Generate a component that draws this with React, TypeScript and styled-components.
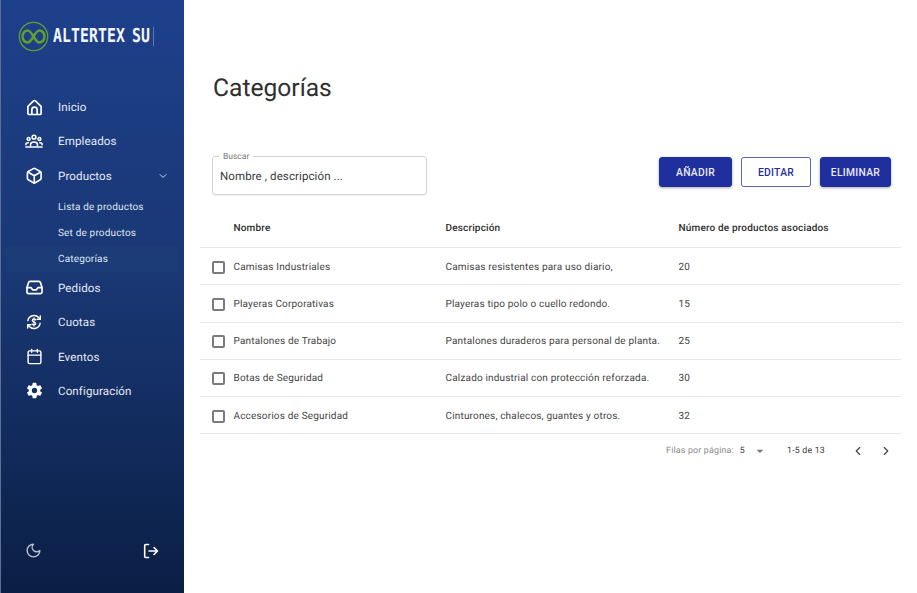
import { createGlobalStyle, styled } from 'styled-components';
import { ReactNode } from 'react';
import { LuCalendar, LuChevronDown, LuChevronLeft, LuChevronRight, LuMoon } from 'react-icons/lu';
import { MdArrowDropDown } from 'react-icons/md';
import { IoSettingsSharp } from 'react-icons/io5';

const GlobalStyle = createGlobalStyle`
  html, body {
    margin: 0;
    padding: 0;
    height: 100%;
    background: #fff;
    font-family: Roboto, "Liberation Sans", sans-serif;
    text-rendering: geometricPrecision;
  }
  * {
    box-sizing: border-box;
  }
`;

const Page = styled.div`
  display: flex;
  width: 917px;
  height: 593px;
  overflow: hidden;
`;

const Sidebar = styled.aside`
  display: flex;
  flex-direction: column;
  width: 184px;
  height: 593px;
  flex-shrink: 0;
  padding: 20px 6px 0 5px;
  border-left: 1px solid #5d6f96;
  background: linear-gradient(180deg, #1e3f8b 0%, #1a3875 45%, #0a1f45 100%);
`;

const Brand = styled.div`
  display: flex;
  align-items: center;
  height: 32px;
  margin-left: 12px;
  gap: 4px;
`;

const BrandName = styled.span`
  display: inline-block;
  font-family: "DejaVu Sans Mono", "Liberation Mono", monospace;
  font-weight: 700;
  font-size: 14.8px;
  letter-spacing: 0.1px;
  word-spacing: -2px;
  color: #f4f6fb;
  white-space: nowrap;
  padding-right: 3px;
  border-right: 1px solid #5f79ad;
  line-height: 15px;
  transform: scaleY(1.3);
`;

const Nav = styled.nav`
  display: flex;
  flex-direction: column;
  margin-top: 38px;
`;

const NavRow = styled.div`
  display: flex;
  align-items: center;
  height: 34.3px;
  padding-left: 18px;
  color: #e6eaf4;
  font-size: 11.6px;
  letter-spacing: 0.1px;
`;

const NavIcon = styled.span`
  display: flex;
  align-items: center;
  justify-content: center;
  width: 20px;
  height: 20px;
  margin-right: 14px;
  color: #fff;
`;

const NavCaret = styled.span`
  display: flex;
  margin-left: auto;
  margin-right: 9px;
  color: #c9d2e6;
  font-size: 12px;
`;

const SubList = styled.div`
  display: flex;
  flex-direction: column;
  padding-top: 1px;
  margin-bottom: -1px;
`;

const SubRow = styled.div<{ $active?: boolean }>`
  display: flex;
  align-items: center;
  height: 26px;
  padding: 1px 0 0 52px;
  border-radius: 3px;
  color: #dfe5f1;
  font-size: 10px;
  letter-spacing: 0.17px;
  background: ${(p) => (p.$active ? '#1c3c77' : 'transparent')};
`;

const SidebarFooter = styled.div`
  display: flex;
  align-items: center;
  justify-content: space-between;
  margin-top: auto;
  margin-bottom: 34px;
  padding: 0 19px;
  color: #fff;
`;

const MoonIcon = styled.span`
  display: flex;
  color: #b9c1d3;
  font-size: 17px;
`;

const Main = styled.main`
  display: flex;
  flex-direction: column;
  flex: 1;
  padding: 0 16px;
`;

const Title = styled.h1`
  margin: 73px 0 0 13px;
  height: 32px;
  font-weight: 400;
  font-size: 24.6px;
  line-height: 32px;
  color: #2f2f2f;
`;

const Toolbar = styled.div`
  display: flex;
  align-items: flex-start;
  justify-content: space-between;
  margin-top: 51px;
  padding: 0 10px 0 12px;
`;

const SearchField = styled.div`
  position: relative;
  display: flex;
  align-items: center;
  width: 215px;
  height: 39px;
  padding: 0 7px;
  border: 1px solid #d4d4d4;
  border-radius: 3px;
  box-shadow: 0 1px 1px rgba(0, 0, 0, 0.06);
`;

const SearchLabel = styled.span`
  position: absolute;
  top: -5px;
  left: 6px;
  padding: 0 4px;
  background: #fff;
  font-size: 8.5px;
  line-height: 11px;
  color: #777;
`;

const SearchText = styled.span`
  font-size: 11.5px;
  letter-spacing: 0.1px;
  color: #3a3a3a;
`;

const Actions = styled.div`
  display: flex;
  gap: 9px;
  margin-top: 1px;
`;

const ActionButton = styled.button<{ $outline?: boolean; $width: number }>`
  width: ${(p) => p.$width}px;
  height: 30px;
  padding: 0;
  border: 1px solid ${(p) => (p.$outline ? '#5767b8' : '#1f2f9e')};
  border-radius: 3px;
  background: ${(p) => (p.$outline ? '#fff' : '#1f2f9e')};
  color: ${(p) => (p.$outline ? '#1f2f9e' : '#e9ebf7')};
  font-family: inherit;
  font-size: 10.3px;
  font-weight: 500;
  letter-spacing: 0.3px;
  box-shadow: ${(p) => (p.$outline ? 'none' : '0 1px 3px rgba(0, 0, 0, 0.35)')};
`;

const Table = styled.div`
  display: flex;
  flex-direction: column;
  margin-top: 13px;
`;

const TableRow = styled.div<{ $head?: boolean }>`
  display: grid;
  grid-template-columns: 33.5px 212px 233px 1fr;
  align-items: center;
  width: 701px;
  height: ${(p) => (p.$head ? '40px' : '37.25px')};
  padding-top: ${(p) => (p.$head ? '1px' : '2px')};
  border-bottom: 1px solid #e8e8e8;
  font-size: 10px;
  letter-spacing: 0.17px;
  color: ${(p) => (p.$head ? '#2e2e2e' : '#454545')};
  font-weight: ${(p) => (p.$head ? 500 : 400)};
`;

const Checkbox = styled.span`
  display: block;
  width: 13px;
  height: 13px;
  margin-left: 12px;
  border: 2px solid #7b7b7b;
  border-radius: 2px;
`;

const Pagination = styled.div`
  display: flex;
  align-items: center;
  justify-content: flex-end;
  width: 701px;
  height: 33px;
  font-size: 8.8px;
  letter-spacing: 0.2px;
  color: #8a8a8a;
`;

const PageSize = styled.span`
  display: flex;
  align-items: center;
  margin-left: 6px;
  color: #3a3a3a;
`;

const SizeCaret = styled(MdArrowDropDown)`
  margin-left: 7px;
  color: #777;
`;

const PageRange = styled.span`
  margin-left: 19px;
  margin-right: 26px;
  color: #3a3a3a;
`;

const PageButton = styled.span`
  display: flex;
  width: 14px;
  justify-content: center;
  color: #444;
  font-size: 14px;
  margin-right: 8px;
  & + & {
    margin-left: 6px;
  }
`;

const HomeIcon = () => (
  <svg width="17" height="17" viewBox="0 0 18 18" fill="none" stroke="currentColor" strokeWidth="1.800" strokeLinejoin="round">
    <path d="M2 7.800 8 2a1.400 1.400 0 0 1 2 0l6 5.800v7.200a1.400 1.400 0 0 1-1.400 1.400H3.400A1.400 1.400 0 0 1 2 15z" />
    <path d="M6.200 16.400v-4.900a2.800 2.800 0 0 1 5.600 0v4.900" />
  </svg>
);

const TeamIcon = () => (
  <svg width="18" height="14.400" viewBox="0 0 20 16" fill="none" stroke="currentColor" strokeWidth="1.700" strokeLinecap="round">
    <circle cx="10" cy="3.500" r="2.100" />
    <circle cx="4" cy="5.500" r="1.600" />
    <circle cx="16" cy="5.500" r="1.600" />
    <path d="M6.200 13v-1.500c0-1.600 1.700-2.600 3.800-2.600s3.800 1 3.800 2.600V13" />
    <path d="M1 12v-.5c0-1 .8-1.800 2.600-1.800M19 12v-.5c0-1-.8-1.800-2.600-1.800" />
    <path d="M1 14.500h18" />
  </svg>
);

const BoxIcon = () => (
  <svg width="16.500" height="17.400" viewBox="0 0 18 19" fill="none" stroke="currentColor" strokeWidth="1.800" strokeLinejoin="round" strokeLinecap="round">
    <path d="M8 1.800a2 2 0 0 1 2 0l5.500 3.200a2 2 0 0 1 1 1.700v5.600a2 2 0 0 1-1 1.700L10 17.200a2 2 0 0 1-2 0L2.500 14a2 2 0 0 1-1-1.700V6.700a2 2 0 0 1 1-1.700z" />
    <path d="M2 5.500 9 9.500l7-4M9 9.500v8" />
  </svg>
);

const InboxIcon = () => (
  <svg width="17" height="15.100" viewBox="0 0 18 16" fill="none" stroke="currentColor" strokeWidth="1.800" strokeLinejoin="round" strokeLinecap="round">
    <path d="M4.200 1.500h9.600a1.500 1.500 0 0 1 1.400 1L17 8v4.800a1.700 1.700 0 0 1-1.700 1.700H2.700A1.700 1.700 0 0 1 1 12.800V8l1.800-5.500a1.500 1.500 0 0 1 1.400-1z" />
    <path d="M1 8h4.200l1.800 2.400h4L12.800 8H17" />
  </svg>
);

const QuotaIcon = () => (
  <svg width="18" height="18" viewBox="0 0 20 20" fill="none" stroke="currentColor" strokeWidth="1.600" strokeLinecap="round" strokeLinejoin="round">
    <path d="M3.200 8.500A7 7 0 0 1 15.200 5l1.600 1.800" />
    <path d="M17 3.200v3.800h-3.600" />
    <path d="M16.800 11.500A7 7 0 0 1 4.800 15L3.200 13.200" />
    <path d="M3 16.800V13h3.600" />
    <path d="M12 7.800c-.4-.8-1.100-1.200-2-1.200-1.200 0-2 .7-2 1.600 0 2.200 4 1.300 4 3.500 0 1-.8 1.700-2 1.700-.9 0-1.600-.4-2-1.200M10 5.500v9" strokeWidth="1.300" />
  </svg>
);

const ExitIcon = () => (
  <svg width="16" height="16" viewBox="0 0 16 16" fill="none" stroke="currentColor" strokeWidth="1.600" strokeLinecap="round" strokeLinejoin="round">
    <path d="M5.500 1.500H2.700a1 1 0 0 0-1 1v11a1 1 0 0 0 1 1h2.800" />
    <path d="M6 8h8.500M11 4.500 14.500 8 11 11.500" />
  </svg>
);

const LogoMark = () => (
  <svg width="31" height="31" viewBox="0 0 31 31" fill="none" stroke="#5fa02f">
    <circle cx="15.500" cy="15.500" r="14.200" strokeWidth="1.300" />
    <path
      d="M4.500 15.500c0-3 2-6 5.200-6 4.600 0 7 12 11.600 12 3.200 0 5.200-3 5.200-6s-2-6-5.200-6c-4.600 0-7 12-11.600 12-3.200 0-5.200-3-5.200-6z"
      strokeWidth="2.500"
    />
  </svg>
);

const products = [
  { name: 'Camisas Industriales', description: 'Camisas resistentes para uso diario,', count: 20 },
  { name: 'Playeras Corporativas', description: 'Playeras tipo polo o cuello redondo.', count: 15 },
  { name: 'Pantalones de Trabajo', description: 'Pantalones duraderos para personal de planta.', count: 25 },
  { name: 'Botas de Seguridad', description: 'Calzado industrial con protección reforzada.', count: 30 },
  { name: 'Accesorios de Seguridad', description: 'Cinturones, chalecos, guantes y otros.', count: 32 },
];

function NavItem({ icon, label, caret }: { icon: ReactNode; label: string; caret?: boolean }) {
  return (
    <NavRow>
      <NavIcon>{icon}</NavIcon>
      {label}
      {caret && (
        <NavCaret>
          <LuChevronDown />
        </NavCaret>
      )}
    </NavRow>
  );
}

export default function App() {
  return (
    <Page>
      <GlobalStyle />
      <Sidebar>
        <Brand>
          <LogoMark />
          <BrandName>ALTERTEX SU</BrandName>
        </Brand>
        <Nav>
          <NavItem icon={<HomeIcon />} label="Inicio" />
          <NavItem icon={<TeamIcon />} label="Empleados" />
          <NavItem icon={<BoxIcon />} label="Productos" caret />
          <SubList>
            <SubRow>Lista de productos</SubRow>
            <SubRow>Set de productos</SubRow>
            <SubRow $active>Categorías</SubRow>
          </SubList>
          <NavItem icon={<InboxIcon />} label="Pedidos" />
          <NavItem icon={<QuotaIcon />} label="Cuotas" />
          <NavItem icon={<LuCalendar size={17} />} label="Eventos" />
          <NavItem icon={<IoSettingsSharp size={17} />} label="Configuración" />
        </Nav>
        <SidebarFooter>
          <MoonIcon>
            <LuMoon />
          </MoonIcon>
          <ExitIcon />
        </SidebarFooter>
      </Sidebar>
      <Main>
        <Title>Categorías</Title>
        <Toolbar>
          <SearchField>
            <SearchLabel>Buscar</SearchLabel>
            <SearchText>Nombre , descripción ...</SearchText>
          </SearchField>
          <Actions>
            <ActionButton $width={73}>AÑADIR</ActionButton>
            <ActionButton $width={70} $outline>EDITAR</ActionButton>
            <ActionButton $width={71}>ELIMINAR</ActionButton>
          </Actions>
        </Toolbar>
        <Table>
          <TableRow $head>
            <span />
            <span>Nombre</span>
            <span>Descripción</span>
            <span>Número de productos asociados</span>
          </TableRow>
          {products.map((product) => (
            <TableRow key={product.name}>
              <Checkbox />
              <span>{product.name}</span>
              <span>{product.description}</span>
              <span>{product.count}</span>
            </TableRow>
          ))}
          <Pagination>
            Filas por página:
            <PageSize>
              5
              <SizeCaret size={16} />
            </PageSize>
            <PageRange>1-5 de 13</PageRange>
            <PageButton>
              <LuChevronLeft />
            </PageButton>
            <PageButton>
              <LuChevronRight />
            </PageButton>
          </Pagination>
        </Table>
      </Main>
    </Page>
  );
}
